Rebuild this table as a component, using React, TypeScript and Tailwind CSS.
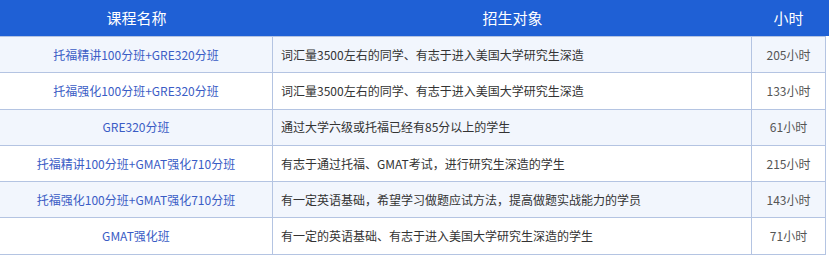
import React from "react";

const rows = [
  ["托福精讲100分班+GRE320分班", "词汇量3500左右的同学、有志于进入美国大学研究生深造", "205小时"],
  ["托福强化100分班+GRE320分班", "词汇量3500左右的同学、有志于进入美国大学研究生深造", "133小时"],
  ["GRE320分班", "通过大学六级或托福已经有85分以上的学生", "61小时"],
  ["托福精讲100分班+GMAT强化710分班", "有志于通过托福、GMAT考试，进行研究生深造的学生", "215小时"],
  ["托福强化100分班+GMAT强化710分班", "有一定英语基础，希望学习做题应试方法，提高做题实战能力的学员", "143小时"],
  ["GMAT强化班", "有一定的英语基础、有志于进入美国大学研究生深造的学生", "71小时"],
];

export default function App() {
  return (
    <div
      className="w-[829px] h-[257px] overflow-hidden bg-white text-[12px]"
      style={{ fontFamily: '"Noto Sans CJK SC", "Noto Sans", sans-serif' }}
    >
      <div className="flex h-[36px] bg-[#1f60d5] text-white text-[15px] items-center">
        <div className="w-[273px] text-center">课程名称</div>
        <div className="w-[479px] text-center">招生对象</div>
        <div className="w-[73px] text-center">小时</div>
      </div>
      <div className="w-[826px] border-r border-b border-[#b4c4e2]">
        {rows.map((r, i) => (
          <div
            key={i}
            className={`flex h-[36.3px] border-t border-[#b4c4e2] ${i % 2 === 0 ? "bg-[#f2f6fd]" : "bg-white"}`}
          >
            <div className="w-[273px] flex items-center justify-center text-[#3a5cc5] border-r border-[#b4c4e2]">
              {r[0]}
            </div>
            <div className="w-[479px] flex items-center pl-[8px] text-[#333333] border-r border-[#b4c4e2]">
              {r[1]}
            </div>
            <div className="flex-1 flex items-center justify-center text-[#555555]">{r[2]}</div>
          </div>
        ))}
      </div>
    </div>
  );
}
